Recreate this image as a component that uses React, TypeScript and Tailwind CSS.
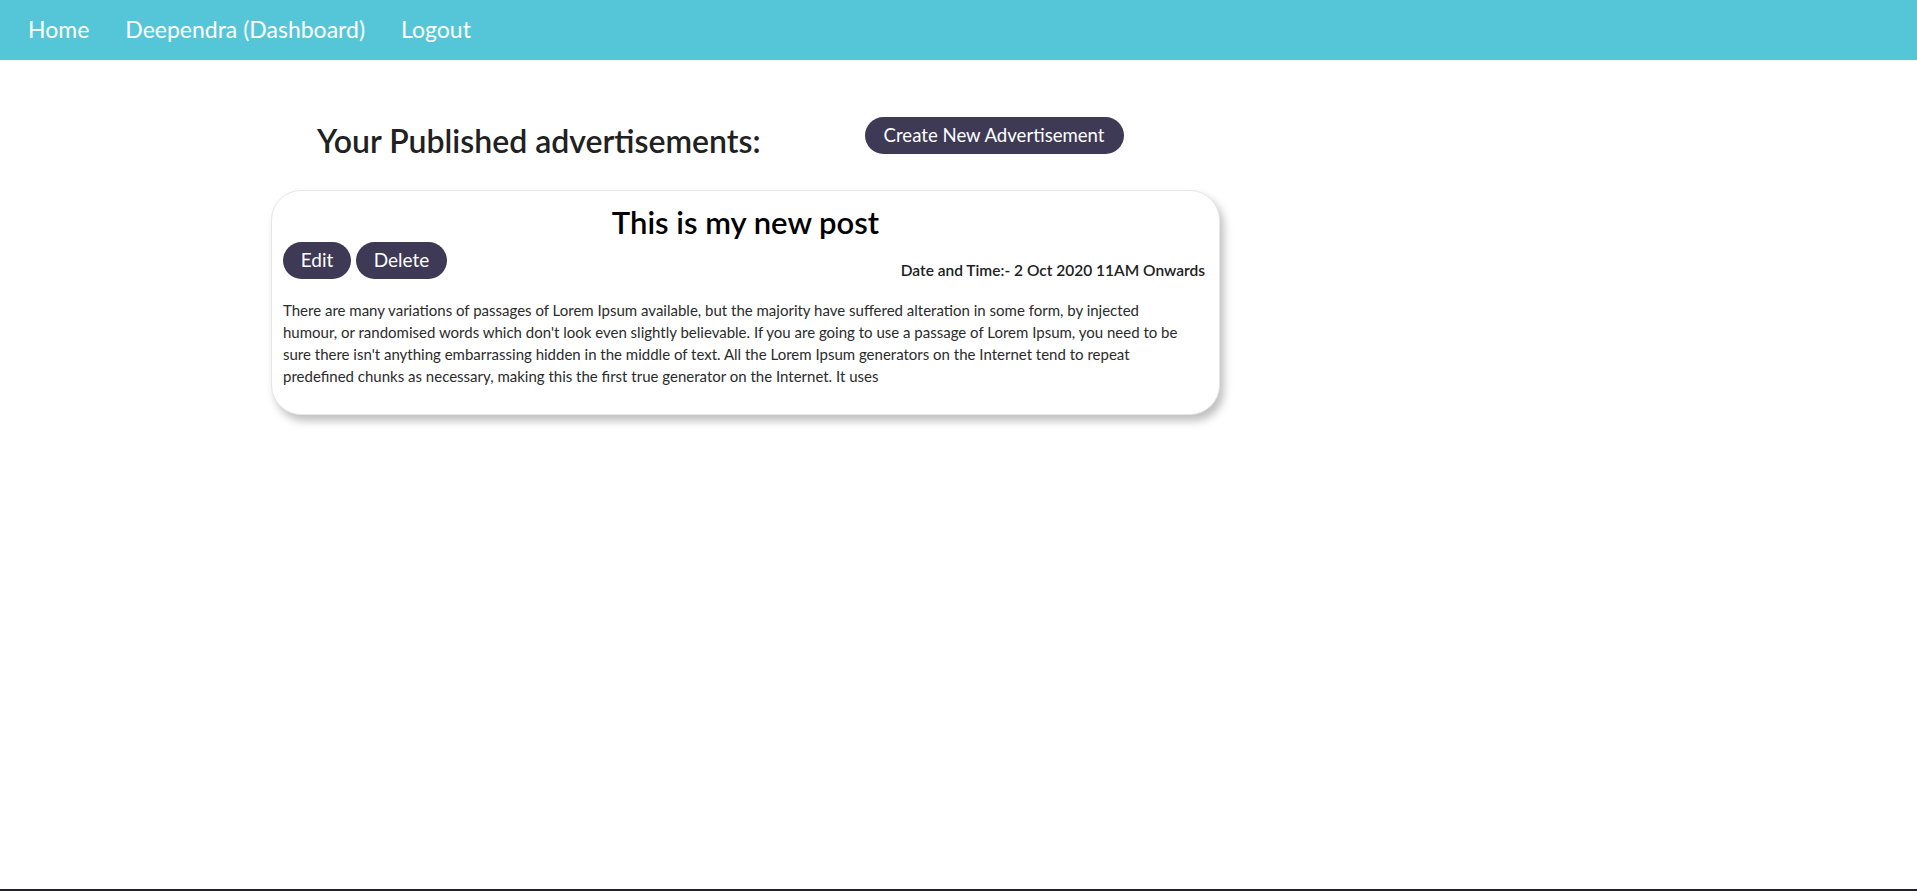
export default function App() {
  const seg = { fontFamily: "Lato, 'Noto Sans', sans-serif" };
  return (
    <div className="flex h-[891px] w-full flex-col bg-white" style={seg}>
      <nav className="flex h-[60px] shrink-0 items-center bg-[#55c6d8] pb-[2px] pl-[28px] text-[23px] text-white">
        <a className="mr-[36px]">Home</a>
        <a className="mr-[36px]">Deependra (Dashboard)</a>
        <a>Logout</a>
      </nav>
      <main className="flex-1 pl-[271px]">
        <div className="flex w-[949px] items-start pt-[57px]">
          <h2 className="ml-[46px] mt-[4px] text-[32px] font-semibold leading-[40px] text-[#212121]">
            Your Published advertisements:
          </h2>
          <button className="ml-[104px] h-[37px] w-[259px] rounded-full bg-[#3e3a56] text-[18.6px] text-white">
            Create New Advertisement
          </button>
        </div>
        <div className="mt-[29px] h-[225px] w-[949px] rounded-[30px] border border-[#e6e6e6] bg-white px-[11px] pt-[12px] shadow-[4px_6px_8px_rgba(0,0,0,0.25)]">
          <h3 className="text-center text-[31px] font-semibold leading-[38px] text-black">This is my new post</h3>
          <div className="mt-[1px] flex items-start justify-between">
            <div className="flex gap-[5px]">
              <button className="h-[37px] w-[68px] rounded-full bg-[#3e3a56] text-[19px] text-white">Edit</button>
              <button className="h-[37px] w-[91px] rounded-full bg-[#3e3a56] text-[19px] text-white">Delete</button>
            </div>
            <div className="mr-[3px] mt-[18px] text-[15.5px] font-semibold leading-[20px] text-[#212121]">
              Date and Time:- 2 Oct 2020 11AM Onwards
            </div>
          </div>
          <p className="mt-[19px] whitespace-nowrap text-[15px] leading-[22px] text-[#2b2b2b]">
            There are many variations of passages of Lorem Ipsum available, but the majority have suffered alteration in some form, by injected
            <br />
            humour, or randomised words which don't look even slightly believable. If you are going to use a passage of Lorem Ipsum, you need to be
            <br />
            sure there isn't anything embarrassing hidden in the middle of text. All the Lorem Ipsum generators on the Internet tend to repeat
            <br />
            predefined chunks as necessary, making this the first true generator on the Internet. It uses
          </p>
        </div>
      </main>
      <div className="h-[2px] shrink-0 bg-[#1f2033]" />
    </div>
  );
}
